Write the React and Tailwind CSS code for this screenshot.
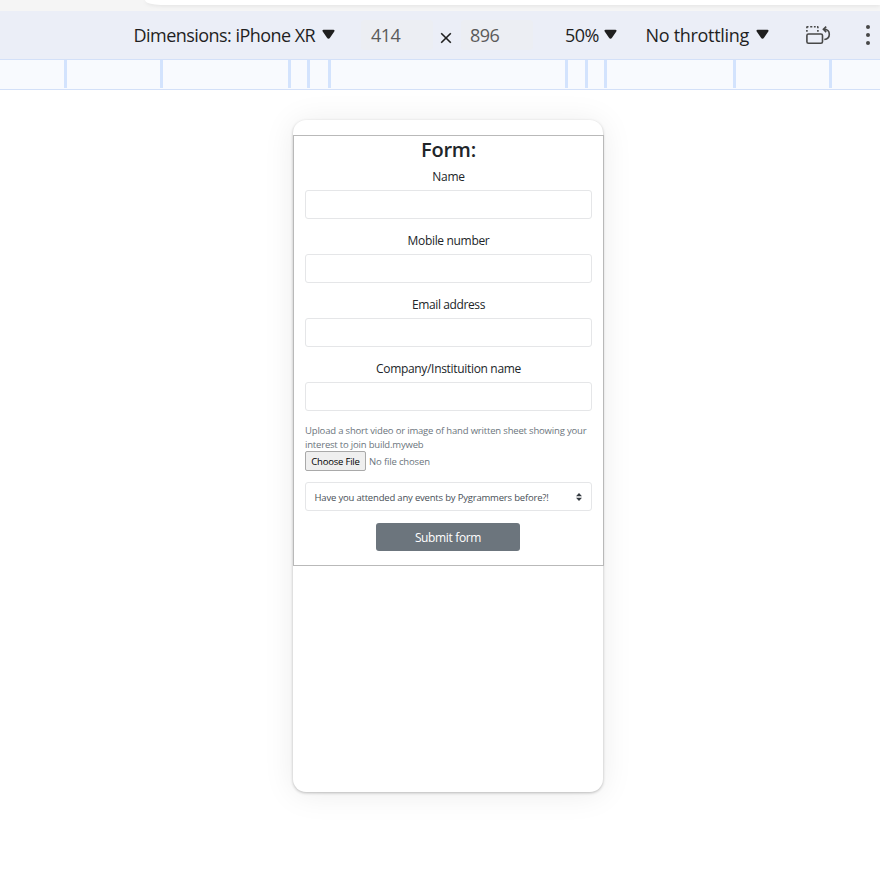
const Caret = () => (
  <svg className="mb-[2px] h-[11px] w-[13px] shrink-0" viewBox="0 0 13 11" fill="#1f1f1f">
    <path d="M1.500.8h10c1 0 1.300.8.8 1.600L8 8.700c-.8 1.300-2.200 1.300-3 0L.7 2.400C.2 1.600.5.8 1.500.8z" />
  </svg>
);

const RotateIcon = () => (
  <svg className="ml-[37px] h-[22px] w-[26px] shrink-0" viewBox="0 0 26 22" fill="none" stroke="#474747" strokeWidth="1.600">
    <rect x=".9" y="10" width="15.600" height="9.300" rx="1.600" />
    <path d="M.9 7.800V5.900M.9 4.300V3.200c0-.3.200-.5.500-.5h1.100M4.200 2.700h2.100M7.900 2.700h1.800M11 2.700h.4c.3 0 .5.200.5.500v1.100M11.900 5.900v1.900" />
    <path d="M18.300 15.500c3-.3 5-2.300 5-5.200S21.100 5.300 17.500 5.300M20.200 2.600l-2.800 2.700 2.800 2.800" />
  </svg>
);

const ticks = [
  "ml-[64px]", "ml-[93px]", "ml-[125px]", "ml-[16px]", "ml-[18px]",
  "ml-[234px]", "ml-[17px]", "ml-[16px]", "ml-[126px]", "ml-[93px]",
];

const fields = [
  { label: "Name", track: "tracking-[-0.25px]" },
  { label: "Mobile number", track: "tracking-[-0.33px]" },
  { label: "Email address", track: "tracking-[-0.38px]" },
  { label: "Company/Instituition name", track: "tracking-[-0.32px]" },
];

export default function App() {
  return (
    <div className="h-[872px] w-[880px] overflow-hidden bg-white font-['Open_Sans',sans-serif] text-[#212529]">
      <div className="h-[11px] bg-[#f5f5f5]">
        <div className="ml-[145px] h-[5px] rounded-bl-[16px_5px] bg-white shadow-[0_1px_4px_rgba(0,0,0,0.08)]" />
      </div>
      <div className="flex h-[48px] items-center whitespace-nowrap bg-[#ebeef7] text-[18px] text-[#1f1f1f]">
        <span className="ml-[133.500px] w-[188px] pt-px tracking-[-0.54px]">Dimensions: iPhone XR</span>
        <Caret />
        <div className="ml-[26.500px] flex h-[30px] w-[72px] items-center rounded bg-[#eceef3] pl-[10px] pt-px text-[#5a5a5a] tracking-[-0.6px]">414</div>
        <svg className="ml-[7px] mt-[6px] h-[12px] w-[12px]" viewBox="0 0 12 12" stroke="#1f1f1f" strokeWidth="1.600"><path d="M1.200 1.200l9.600 9.600M10.800 1.200l-9.600 9.600" /></svg>
        <div className="ml-[9px] flex h-[30px] w-[72px] items-center rounded bg-[#eceef3] pl-[9px] pt-px text-[#5a5a5a] tracking-[-0.6px]">896</div>
        <span className="ml-[32px] w-[39px] pt-px tracking-[-0.6px]">50%</span>
        <Caret />
        <span className="ml-[28.500px] w-[110px] pt-px tracking-[-0.3px]">No throttling</span>
        <Caret />
        <RotateIcon />
        <svg className="ml-[33.500px] h-[22px] w-[6px] shrink-0" viewBox="0 0 6 22" fill="#474747"><circle cx="3" cy="3" r="2" /><circle cx="3" cy="11" r="2" /><circle cx="3" cy="19" r="2" /></svg>
      </div>
      <div className="flex h-[31px] border-y border-[#d3e0f8] bg-[#f8fafe]">
        {ticks.map((t, i) => <i key={i} className={`${t} h-[28px] w-[3px] shrink-0 bg-[#d3e3fd]`} />)}
      </div>
      <div className="ml-[293px] mt-[30px] h-[672px] w-[310px] rounded-[13px] bg-white pt-[15px] shadow-[0_1px_3px_rgba(0,0,0,0.25),0_2px_32px_rgba(0,0,0,0.08)]">
        <form className="flex h-[431px] w-[311px] flex-col items-center border border-[#b9b9b9] px-[11px]">
          <h1 className="h-[29px] text-[20px] font-semibold leading-[28px] tracking-[-0.2px]">Form:</h1>
          {fields.map((f) => (
            <label key={f.label} className="flex h-[64px] w-full flex-col text-center text-[12px] leading-[24px]">
              <span className={`h-[25px] ${f.track}`}>{f.label}</span>
              <input className="h-[29px] w-full rounded-[3px] border border-[#e5e6e8] bg-white" />
            </label>
          ))}
          <div className="mt-[3px] w-full whitespace-nowrap text-[9.500px] leading-[14px] text-[#6c757d]">
            <p className="tracking-[-0.18px]">Upload a short video or image of hand written sheet showing your</p>
            <p className="tracking-[-0.19px]">interest to join build.myweb</p>
            <div className="-mt-px flex h-[20px] items-center">
              <button type="button" className="h-[20px] w-[61px] rounded-[2px] border border-[#a9a9a9] bg-[#efefef] pt-px text-black tracking-[-0.2px]">Choose File</button>
              <span className="ml-[3px] pt-px tracking-[-0.15px]">No file chosen</span>
            </div>
          </div>
          <div className="mt-[11px] flex h-[29px] w-full shrink-0 items-center justify-between whitespace-nowrap rounded-[3px] border border-[#e5e6e8] pl-[8.500px] pr-[9px] text-[9.500px] text-[#495057]">
            <span className="pt-[3px] tracking-[-0.19px]">Have you attended any events by Pygrammers before?!</span>
            <svg className="h-[8px] w-[6px]" viewBox="0 0 6 8" fill="#343a40"><path d="M0 3.300L3 0l3 3.300zM0 4.700L3 8l3-3.300z" /></svg>
          </div>
          <button type="button" className="mr-px mt-[12px] h-[28px] w-[144px] shrink-0 rounded-[3px] bg-[#6c757d] pt-[2px] text-[12px] text-white tracking-[-0.35px]">Submit form</button>
        </form>
      </div>
    </div>
  );
}
